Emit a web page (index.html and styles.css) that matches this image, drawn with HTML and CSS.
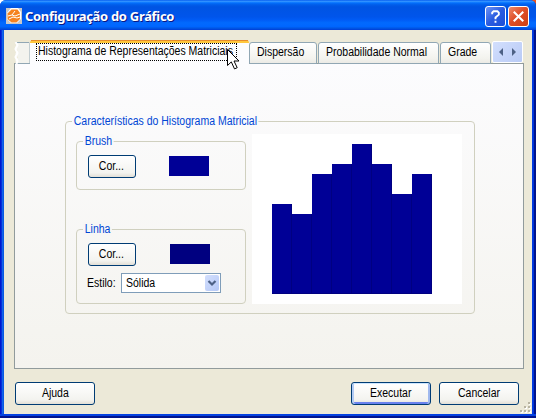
FILE: index.html
```html
<!DOCTYPE html>
<html lang="pt-BR">
<head>
<meta charset="utf-8">
<title>Configuração do Gráfico</title>
<link rel="stylesheet" href="styles.css">
</head>
<body>
<div class="window">
  <header class="titlebar">
    <svg class="app-icon" width="16" height="16" viewBox="0 0 16 16">
      <rect width="16" height="16" fill="#c9c8c8"/>
      <path d="M5 0h7l3 4v7l-4 4H5l-4-4V5z" fill="#fff"/>
      <path d="M5.500 1.500h6L14 5v6l-3.500 3.500h-5L1.500 11V5.500z" fill="#f58220"/>
      <path d="M2 8l4-1 3-4M6 7l3 1 5-2M3 11l4-2 4 1 3-1" fill="none" stroke="#fff" stroke-width="1"/>
    </svg>
    <h1 class="title">Configuração do Gráfico</h1>
    <button class="caption help"><svg width="20" height="20" viewBox="0 0 20 20"><path d="M6.500 7.500V6L8 4.500h4L13.500 6v2L10 11v2M10 14.500v2" fill="none" stroke="#fff" stroke-width="2"/></svg></button>
    <button class="caption close"><svg width="20" height="20" viewBox="0 0 20 20"><path d="M5 5l10 10M15 5L5 15" fill="none" stroke="#fff" stroke-width="2.200"/></svg></button>
  </header>
  <main class="client">
    <nav class="tabs">
      <svg class="stub" width="17" height="22" viewBox="0 0 17 22">
        <path d="M3 .5h11.500l1.500 1.500v19.500H3l-2-3 3-3-3-4 3-3-3-3 2-3z" fill="#f3f3ee"/>
        <path d="M1 .5h14l1 1v20H1" fill="none" stroke="#91a7b4"/>
        <path d="M1.500 0l2 3-2 4 2 4-2 4 2 4-1 3" fill="none" stroke="#fff" stroke-width="2"/>
      </svg>
      <div class="tab active"><div class="focus"><span class="label">Histograma de Representações Matriciais</span></div></div>
      <div class="tab disp"><span class="label">Dispersão</span></div>
      <div class="tab prob"><span class="label">Probabilidade Normal</span></div>
      <div class="tab grade"><span class="label">Grade</span></div>
      <div class="scroller">
        <svg width="31" height="22" viewBox="0 0 31 22"><path d="M11 7v8L7 11zM20 7v8l4-4z" fill="#4d6185"/></svg>
      </div>
    </nav>
    <section class="panel">
      <fieldset class="group outer">
        <legend class="label">Características do Histograma Matricial</legend>
        <div class="options">
          <fieldset class="group brush">
            <legend class="label">Brush</legend>
            <div class="row"><button class="btn small"><span class="label">Cor...</span></button><i class="swatch"></i></div>
          </fieldset>
          <fieldset class="group line">
            <legend class="label">Linha</legend>
            <div class="row"><button class="btn small"><span class="label">Cor...</span></button><i class="swatch dark"></i></div>
            <div class="style-row">
              <span class="label">Estilo:</span>
              <div class="select"><span class="label">Sólida</span>
                <svg class="drop" width="14" height="16" viewBox="0 0 14 16"><path d="M3.500 6L7 9.500 10.500 6" fill="none" stroke="#4d6185" stroke-width="2.200"/></svg>
              </div>
            </div>
          </fieldset>
        </div>
        <div class="chart">
          <i class="bar" style="height:90px"></i><i class="bar" style="height:80px"></i><i class="bar" style="height:120px"></i><i class="bar" style="height:130px"></i><i class="bar" style="height:150px"></i><i class="bar" style="height:130px"></i><i class="bar" style="height:100px"></i><i class="bar" style="height:120px"></i>
        </div>
      </fieldset>
    </section>
    <footer class="actions">
      <button class="btn"><span class="label">Ajuda</span></button>
      <button class="btn default"><span class="label">Executar</span></button>
      <button class="btn"><span class="label">Cancelar</span></button>
    </footer>
  </main>
  <svg class="grip" width="12" height="12" viewBox="0 0 12 12"><path d="M9 1h2v2H9zM5 5h2v2H5zM9 5h2v2H9zM1 9h2v2H1zM5 9h2v2H5zM9 9h2v2H9z" fill="#fff"/><path d="M8 0h2v2H8zM4 4h2v2H4zM8 4h2v2H8zM0 8h2v2H0zM4 8h2v2H4zM8 8h2v2H8z" fill="#b8b4a2"/></svg>
  <svg class="cursor" width="13" height="21" viewBox="0 0 13 21"><path d="M.5.500v16l3.800-3.600 3.200 7 2.700-1.200-3.200-6.700h5z" fill="#fff" stroke="#000"/></svg>
</div>
</body>
</html>
```

FILE: styles.css
```css
* { box-sizing: border-box; }
body {
  margin: 0;
  background: linear-gradient(90deg, #fff 50%, #e8501c 50%);
  font: 12px/14px "Liberation Sans", Arial, sans-serif;
  color: #000;
  overflow: hidden;
}
/* Narrow dialog lettering */
.label {
  display: block;
  white-space: nowrap;
  transform: scaleX(.875);
  transform-origin: 0 0;
}
.window {
  position: relative;
  width: 536px;
  height: 418px;
  padding: 0 4px 4px;
  border-radius: 6px 6px 0 0;
  background: linear-gradient(90deg, #0019cf 0, #0019cf 1px, #0831d9 1px, #0831d9 2px, #166aee 2px, #0855dd 4px, #0855dd 532px, #003fe6 532px, #0030d4 534px, #00138c 534px);
  box-shadow: inset 0 -2px #00138c, inset 0 -4px #0441e0;
}
.titlebar {
  display: flex;
  align-items: center;
  height: 30px;
  margin: 0 -4px;
  padding: 2px 7px 0 6px;
  border-radius: 6px 6px 0 0;
  background: linear-gradient(#0058ee 0, #3593ff 4%, #288eff 6%, #127dff 8%, #036ffc 10%, #0262ee 14%, #0057e5 20%, #0054e3 24%, #0055eb 56%, #005bf5 66%, #026afe 76%, #0066ff 88%, #0057e5 94%, #003dd7 100%);
}
.app-icon { flex: none; }
.title {
  flex: 1;
  margin: 0 0 0 3px;
  color: #fff;
  font: bold 13px/18px "Noto Sans", sans-serif;
  letter-spacing: -.3px;
  text-shadow: 1px 1px #0a1883;
  white-space: nowrap;
}
.caption {
  width: 21px;
  height: 21px;
  margin: 1px 0 0 2px;
  padding: 0;
  border: 1px solid #fff;
  border-radius: 3px;
  overflow: hidden;
}
.caption svg { display: block; width: 19px; height: 19px; }
.help { background: linear-gradient(135deg, #6d93f5, #2a5be0 50%, #1c4fd8); }
.close { background: linear-gradient(135deg, #ee8a6a, #df4f28 45%, #cc3f14); }
.client { height: 384px; padding: 10px 8px 0 10px; background: #ece9d8; }
.tabs {
  position: relative;
  z-index: 1;
  display: flex;
  align-items: flex-end;
  height: 24px;
}
.stub { flex: none; }
.tab {
  flex: none;
  height: 22px;
  padding: 2px 0 0 7px;
  border: 1px solid #91a7b4;
  border-radius: 3px 3px 0 0;
  background: linear-gradient(#fff, #f3f3ee 75%, #ecebe6);
}
.active {
  position: relative;
  width: 219px;
  height: 24px;
  margin-left: -1px;
  padding: 0 0 0 6px;
  border: 0;
  border-top: 3px solid #ffc73c;
  background: #fcfcfe;
}
.active::before {
  content: "";
  position: absolute;
  inset: -3px 1px auto;
  height: 1px;
  background: #e68b2c;
}
.focus { width: 201px; height: 18px; padding: 0 0 0 1px; border: 1px dotted #000; }
.disp { width: 68px; }
.prob { width: 121px; margin-left: 1px; }
.grade { width: 51px; margin-left: 1px; }
.scroller {
  flex: none;
  width: 31px;
  height: 22px;
  margin: 0 0 1px 1px;
  border: 1px solid #fff;
  border-radius: 2px;
  background: linear-gradient(135deg, #d3dffd, #b9cbf6);
}
.scroller svg { display: block; margin: -1px; }
.panel {
  height: 306px;
  margin-top: -1px;
  padding: 57px 0 0 50px;
  border: 1px solid #919b9c;
  background: linear-gradient(#fcfcfe, #f4f3ee);
}
.group {
  position: relative;
  min-width: 0;
  margin: 0;
  padding: 0;
  border: 1px solid #d0d0bf;
  border-radius: 4px;
}
legend {
  position: absolute;
  top: -8px;
  left: 6px;
  padding: 0 2px;
  background: #fafafb;
  color: #0046d5;
}
.outer { display: flex; width: 410px; height: 193px; }
.options { width: 186px; padding: 19px 0 0 10px; }
.brush { width: 170px; height: 49px; }
.line { width: 170px; height: 75px; margin-top: 39px; }
.brush legend { background: #f9f9fa; }
.line legend { background: #f7f6f5; }
.row { display: flex; gap: 33px; padding: 13px 0 0 11px; }
.swatch { width: 40px; height: 20px; margin-top: 1px; background: #000096; }
.dark { margin-left: 1px; background: #000080; }
.btn {
  display: flex;
  justify-content: center;
  align-items: center;
  width: 80px;
  height: 23px;
  padding: 0 0 1px;
  border: 1px solid #003c74;
  border-radius: 3px;
  background: linear-gradient(#fff, #f3f3ef 80%, #e2dfd6);
  font: inherit;
  color: #000;
}
.btn .label { transform-origin: 50% 0; }
.small { width: 48px; }
.small .label { margin-left: -2px; }
.style-row { display: flex; padding: 7px 0 0 10px; }
.style-row > .label { width: 34px; padding-top: 3px; }
.select {
  display: flex;
  justify-content: space-between;
  width: 100px;
  height: 20px;
  padding: 1px 1px 1px 4px;
  border: 1px solid #7f9db9;
  background: #fff;
}
.select .label { padding-top: 1px; }
.drop { border-radius: 2px; background: linear-gradient(135deg, #d3dffd, #b5c8f6); }
.chart {
  display: flex;
  flex: none;
  align-items: flex-end;
  width: 210px;
  height: 170px;
  margin-top: 12px;
  padding: 0 20px 10px;
  background: #fff;
}
.bar {
  width: 20px;
  background: #000096;
  box-shadow: inset -1px -1px #000080;
}
.actions { display: flex; padding: 13px 0 0 1px; }
.default {
  margin: 0 8px 0 256px;
  box-shadow: inset 0 1px #cee7ff, inset 2px 0 #b3cbf3, inset -2px 0 #a0b9ee, inset 0 -2px #6982ee;
}
.grip { position: absolute; left: 520px; top: 402px; }
.cursor { position: absolute; z-index: 2; left: 227px; top: 49px; }
```
